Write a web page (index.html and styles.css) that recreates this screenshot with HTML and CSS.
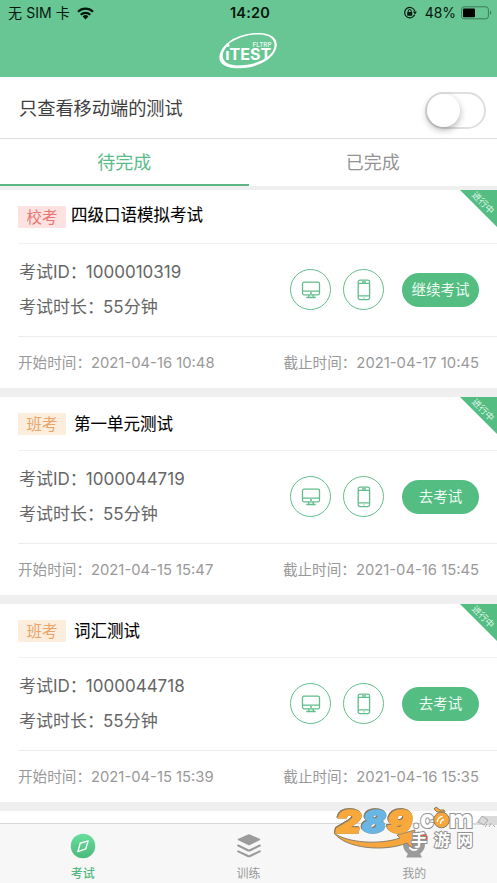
FILE: index.html
```html
<!DOCTYPE html>
<html lang="zh-CN">
<head>
<meta charset="utf-8">
<title>iTEST</title>
<link rel="stylesheet" href="styles.css">
</head>
<body>
<svg class="defs" width="0" height="0">
  <symbol id="monitor" viewBox="0 0 20 18">
    <rect x="1.5" y="1.2" width="17" height="12.6" rx="1.5"/><path d="M1.5 10.2h17M8 14l-.5 2.2M12 14l.5 2.2M5.3 16.5h9.4"/><circle cx="10" cy="12.1" r=".4"/>
  </symbol>
  <symbol id="phone" viewBox="0 0 14 22">
    <rect x="1.2" y="1.2" width="11.4" height="19.4" rx="1.8"/><path d="M1.2 4.4h11.4M1.2 16.9h11.4M5 2.8h4M6.4 18.8h1"/>
  </symbol>
</svg>
<div class="app">
  <header class="header">
    <div class="status">
      <div class="carrier"><span>无 SIM 卡</span>
        <svg width="17" height="13" viewBox="0 0 17 13"><g fill="none" stroke="#06170e" stroke-width="2.2"><path d="M1 4.800a10.600 10.600 0 0 1 15 0"/><path d="M3.700 7.800a6.800 6.800 0 0 1 9.600 0"/></g><path d="M5.600 9.400a4.100 4.100 0 0 1 5.800 0L8.500 12.400z" fill="#06170e"/></svg>
      </div>
      <div class="clock">14:20</div>
      <div class="power">
        <svg width="14" height="14" viewBox="0 0 14 14"><path d="M11.600 8.800A5.200 5.200 0 1 1 11.800 5" fill="none" stroke="#06170e" stroke-width="1.2"/><path d="M9.900 5.600h4L12 8.400z" fill="#06170e"/><rect x="4.200" y="6" width="5" height="3.800" rx=".5" fill="#06170e"/><path d="M5.200 6V5a1.500 1.500 0 0 1 3 0v1" fill="none" stroke="#06170e"/></svg>
        <span>48%</span>
        <svg width="31" height="14" viewBox="0 0 31 14"><rect x=".6" y=".8" width="26.8" height="12" rx="2.6" fill="none" stroke="#3e7b5a"/><rect x="2" y="2.400" width="12" height="8.800" rx="1" fill="#000"/><path d="M29 4.800c1.800.6 1.800 3.400 0 4z" fill="#3e7b5a"/></svg>
      </div>
    </div>
    <svg class="logo" width="62" height="40" viewBox="0 0 62 40">
      <path fill="#fff" d="M9 12.500C17 5 31 1.500 43 2.100c10 .6 16 5.300 15.800 11.900C58.500 26 41 37.200 22 37.300 8 37.300 1 33 1.400 25.800c.3-4.300 3-8.800 6.200-12l1.400 1.400C6 19 4.500 22 4.800 25.500 5.200 32 13 35 23 34.300 41 33.400 56 25 56.500 14.500 56.600 7.500 51 4 42 3.500 31 3 19 6.500 10.300 13.200z"/>
      <circle cx="9.600" cy="14.200" r="1.900" fill="#fff"/>
      <text x="7.200" y="29" textLength="46" lengthAdjust="spacingAndGlyphs" class="logo-main">ıTEST</text>
      <text x="34.500" y="15.500" textLength="19" lengthAdjust="spacingAndGlyphs" class="logo-sub">FLTRP</text>
    </svg>
  </header>

  <section class="filter"><span>只查看移动端的测试</span><div class="switch"></div></section>
  <nav class="tabs"><div class="tab tab-active">待完成</div><div class="tab">已完成</div></nav>

  <main class="list">
    <article class="card">
      <div class="corner"><span>进行中</span></div>
      <div class="head"><span class="tag tag-school">校考</span><h2 class="title">四级口语模拟考试</h2></div>
      <div class="info">
        <div class="meta"><p>考试ID：<span class="num">1000010319</span></p><p>考试时长：<span class="num">55</span>分钟</p></div>
        <div class="device"><svg width="20" height="18"><use href="#monitor"/></svg></div>
        <div class="device"><svg width="14" height="22"><use href="#phone"/></svg></div>
        <div class="button">继续考试</div>
      </div>
      <div class="times"><span>开始时间：<span class="date">2021-04-16 10:48</span></span><span>截止时间：<span class="date">2021-04-17 10:45</span></span></div>
    </article>
    <article class="card">
      <div class="corner"><span>进行中</span></div>
      <div class="head"><span class="tag tag-class">班考</span><h2 class="title title-unit">第一单元测试</h2></div>
      <div class="info">
        <div class="meta"><p>考试ID：<span class="num">1000044719</span></p><p>考试时长：<span class="num">55</span>分钟</p></div>
        <div class="device"><svg width="20" height="18"><use href="#monitor"/></svg></div>
        <div class="device"><svg width="14" height="22"><use href="#phone"/></svg></div>
        <div class="button">去考试</div>
      </div>
      <div class="times"><span>开始时间：<span class="date">2021-04-15 15:47</span></span><span>截止时间：<span class="date">2021-04-16 15:45</span></span></div>
    </article>
    <article class="card">
      <div class="corner"><span>进行中</span></div>
      <div class="head"><span class="tag tag-class">班考</span><h2 class="title title-unit">词汇测试</h2></div>
      <div class="info">
        <div class="meta"><p>考试ID：<span class="num">1000044718</span></p><p>考试时长：<span class="num">55</span>分钟</p></div>
        <div class="device"><svg width="20" height="18"><use href="#monitor"/></svg></div>
        <div class="device"><svg width="14" height="22"><use href="#phone"/></svg></div>
        <div class="button">去考试</div>
      </div>
      <div class="times"><span>开始时间：<span class="date">2021-04-15 15:39</span></span><span>截止时间：<span class="date">2021-04-16 15:35</span></span></div>
    </article>
    <div class="next-card"></div>
  </main>

  <footer class="tabbar">
    <div class="item item-active">
      <svg width="28" height="28" viewBox="0 0 28 28"><defs><linearGradient id="g" x2="0" y2="1"><stop stop-color="#68df9d"/><stop offset="1" stop-color="#4bba7b"/></linearGradient></defs><circle cx="14" cy="14" r="13.200" fill="url(#g)"/><path d="M19.500 8.500 17 17l-8.500 3L11 11z" fill="none" stroke="#fff" stroke-width="1.500" stroke-linejoin="round"/></svg>
      <span>考试</span>
    </div>
    <div class="item">
      <svg width="28" height="28" viewBox="0 0 28 28"><path d="M13 1.600q1-.4 2 0l10.500 4.700q1.300.7 0 1.400L15 12.900q-1 .5-2 0L2.500 7.700q-1.300-.7 0-1.400z" fill="#9b9b9b"/><path d="m2.400 13.500 10.400 5.100q1.200.6 2.400 0l10.400-5.100M2.400 19.700l10.400 5.100q1.200.6 2.400 0l10.400-5.100" fill="none" stroke="#9b9b9b" stroke-width="2.200" stroke-linecap="round"/></svg>
      <span>训练</span>
    </div>
    <div class="item">
      <svg width="28" height="28" viewBox="0 0 28 28"><circle cx="14" cy="12.500" r="11.800" fill="#9b9b9b"/><path d="m8 21-2.500 5.500h17L20 21z" fill="#9b9b9b"/><path d="M9.500 16q4.500 5 9 0" fill="none" stroke="#fff" stroke-width="2" stroke-linecap="round"/><circle cx="23" cy="5.500" r="5.800" fill="#f35b4c"/></svg>
      <span>我的</span>
    </div>
  </footer>

  <svg class="watermark" width="165" height="48" viewBox="0 0 165 48">
    <path d="m141 21 10-9h14v9z" fill="#dadada"/>
    <path d="M2 29C15 39 48 41 68 34l-3-3 18-5-3 18-5-5C53 48 14 45 2 29z" fill="#f6a63b" stroke="#8c8170"/>
    <g class="mark-number">
      <text x="4" y="28.500" textLength="25" lengthAdjust="spacingAndGlyphs" fill="#f8a93c" stroke="#f8a93c">2</text>
      <text x="30" y="28.500" textLength="24" lengthAdjust="spacingAndGlyphs" fill="#69b6e5" stroke="#69b6e5">8</text>
      <text x="55" y="28.500" textLength="25" lengthAdjust="spacingAndGlyphs" fill="#f8a93c" stroke="#f8a93c">9</text>
    </g>
    <text x="80" y="24" textLength="22" lengthAdjust="spacingAndGlyphs" class="mark-com">.c</text>
    <text x="117" y="24" textLength="24" lengthAdjust="spacingAndGlyphs" class="mark-com">m</text>
    <g stroke="#8c7a60" fill="#f6a63b"><path d="m105 8-3-3 2-2 4 3h4l1 2z"/><circle cx="109.500" cy="16" r="7.800"/></g>
    <path d="M105.500 18a5 5 0 0 1 5-5.500M108.500 20a4 4 0 0 1 3.500-4.500" fill="none" stroke="#fff" stroke-width="1.300"/>
    <path d="m146 18 4-6 6 4-4 5zm9 2-2 3m6-4-2 4m4-2 2 2" fill="none" stroke="#aaa"/>
    <text x="79" y="42" textLength="62" class="mark-cn">手游网</text>
  </svg>
</div>
</body>
</html>
```

FILE: styles.css
```css
* { box-sizing: border-box; }
body { margin: 0; background: #fff; font-family: Inter, "Noto Sans CJK SC", sans-serif; }
.defs { position: absolute; }
.app { position: relative; width: 497px; height: 883px; overflow: hidden; display: flex; flex-direction: column; }
.header { height: 77px; flex: none; background: #68c594; color: #06170e; display: flex; flex-direction: column; align-items: center; }
.status { width: 100%; height: 26px; padding: 0 5px 0 8px; display: grid; grid-template-columns: 1fr auto 1fr; align-items: center; font-size: 14px; line-height: 26px; }
.carrier, .power { display: flex; align-items: center; }
.carrier { gap: 7px; letter-spacing: .1px; }
.power { justify-content: flex-end; gap: 5px; }
.power span { margin-left: 3px; letter-spacing: -.1px; }
.clock { font-weight: 600; font-size: 14.5px; letter-spacing: .2px; }
.logo { margin: 5px 0 0 0; }
.logo-main { font: 700 15.5px Inter, sans-serif; fill: #fff; }
.logo-sub { font: 600 6.5px Inter, sans-serif; fill: #e5f7ed; }
.filter { height: 62px; flex: none; border-bottom: 1px solid #dedede; padding: 0 11px 0 19px; display: flex; align-items: center; justify-content: space-between; font-size: 18.2px; color: #3e3e3e; }
.filter span { margin-top: -2px; }
.switch { width: 61px; height: 37px; margin-top: 5px; border: 2px solid #dfdfdf; border-radius: 19px; }
.switch::before { content: ""; display: block; width: 33px; height: 33px; border-radius: 50%; background: #fff; box-shadow: 0 3px 7px rgba(0,0,0,.3); }
.tabs { height: 47px; flex: none; display: flex; }
.tab { flex: 1; font-size: 18px; line-height: 48px; text-align: center; color: #949494; }
.tab-active { color: #5bbb88; border-bottom: 2px solid #5bb585; }
.list { flex: 1; background: #efefef; padding-top: 4px; display: flex; flex-direction: column; gap: 9px; overflow: hidden; }
.card { position: relative; flex: none; height: 198px; background: #fff; padding-left: 18px; }
.corner { position: absolute; top: 0; right: 0; width: 37px; height: 37px; background: #53bd82; clip-path: polygon(0 0, 100% 0, 100% 100%); }
.corner span { position: absolute; left: 8px; top: 7px; width: 30px; text-align: center; font-size: 9px; line-height: 12px; color: #e4f8ed; transform: rotate(45deg); white-space: nowrap; }
.head { height: 54px; border-bottom: 1px solid #f1f1f1; display: flex; align-items: center; }
.tag { width: 48px; height: 22px; font-size: 15.5px; line-height: 23px; text-align: center; }
.tag-school { color: #e77573; background: #fde2e1; }
.tag-class { color: #e9a469; background: #fdeddd; }
.title { margin: -3px 0 0 5px; font-size: 16.5px; line-height: 24px; font-weight: 400; color: #000; -webkit-text-stroke: .1px #000; }
.title-unit { margin: 0 0 0 8px; }
.info { height: 93px; border-bottom: 1px solid #ececec; padding: 0 18px 0 1px; display: flex; align-items: center; }
.meta { flex: 1; font-size: 17px; line-height: 35px; color: #666; }
.meta p { margin: 0; white-space: nowrap; }
.num { font-size: 17px; margin-left: -1px; }
.device { width: 41px; height: 41px; margin: -1px 12px 0 0; border: 1.5px solid #62bd8c; border-radius: 50%; display: flex; align-items: center; justify-content: center; fill: none; stroke: #62bd8c; stroke-width: 1.3; }
.button { width: 77px; height: 34px; margin-left: 6px; border-radius: 17px; background: #53bd82; color: #eefaf3; font-size: 14.5px; line-height: 33px; text-align: center; }
.times { height: 49px; padding: 0 18px 0 0; display: flex; align-items: center; justify-content: space-between; color: #999; font-size: 14.6px; white-space: nowrap; }
.date { font-size: 14.8px; }
.next-card { height: 40px; flex: none; background: #fff; }
.tabbar { height: 60px; flex: none; border-top: 1px solid #d8d8d8; background: #f7f7f7; display: flex; }
.item { flex: 1; display: flex; flex-direction: column; align-items: center; padding-top: 9px; color: #999; font-size: 12px; line-height: 18px; gap: 6px; }
.item-active { color: #54b980; font-weight: 500; }
.watermark { position: absolute; left: 332px; top: 804px; }
.mark-number { font: italic 900 31px Inter, sans-serif; stroke-width: 1.6px; filter: drop-shadow(.8px .8px 0 #8c7a60) drop-shadow(-.8px -.8px 0 #8c7a60); }
.mark-com { font: 800 25px Inter, sans-serif; fill: #fff; stroke: #929292; stroke-width: 2px; paint-order: stroke; }
.mark-cn { font: 700 16px "Noto Sans CJK SC", sans-serif; fill: #fff; stroke: #929292; stroke-width: 2px; paint-order: stroke; }
```
